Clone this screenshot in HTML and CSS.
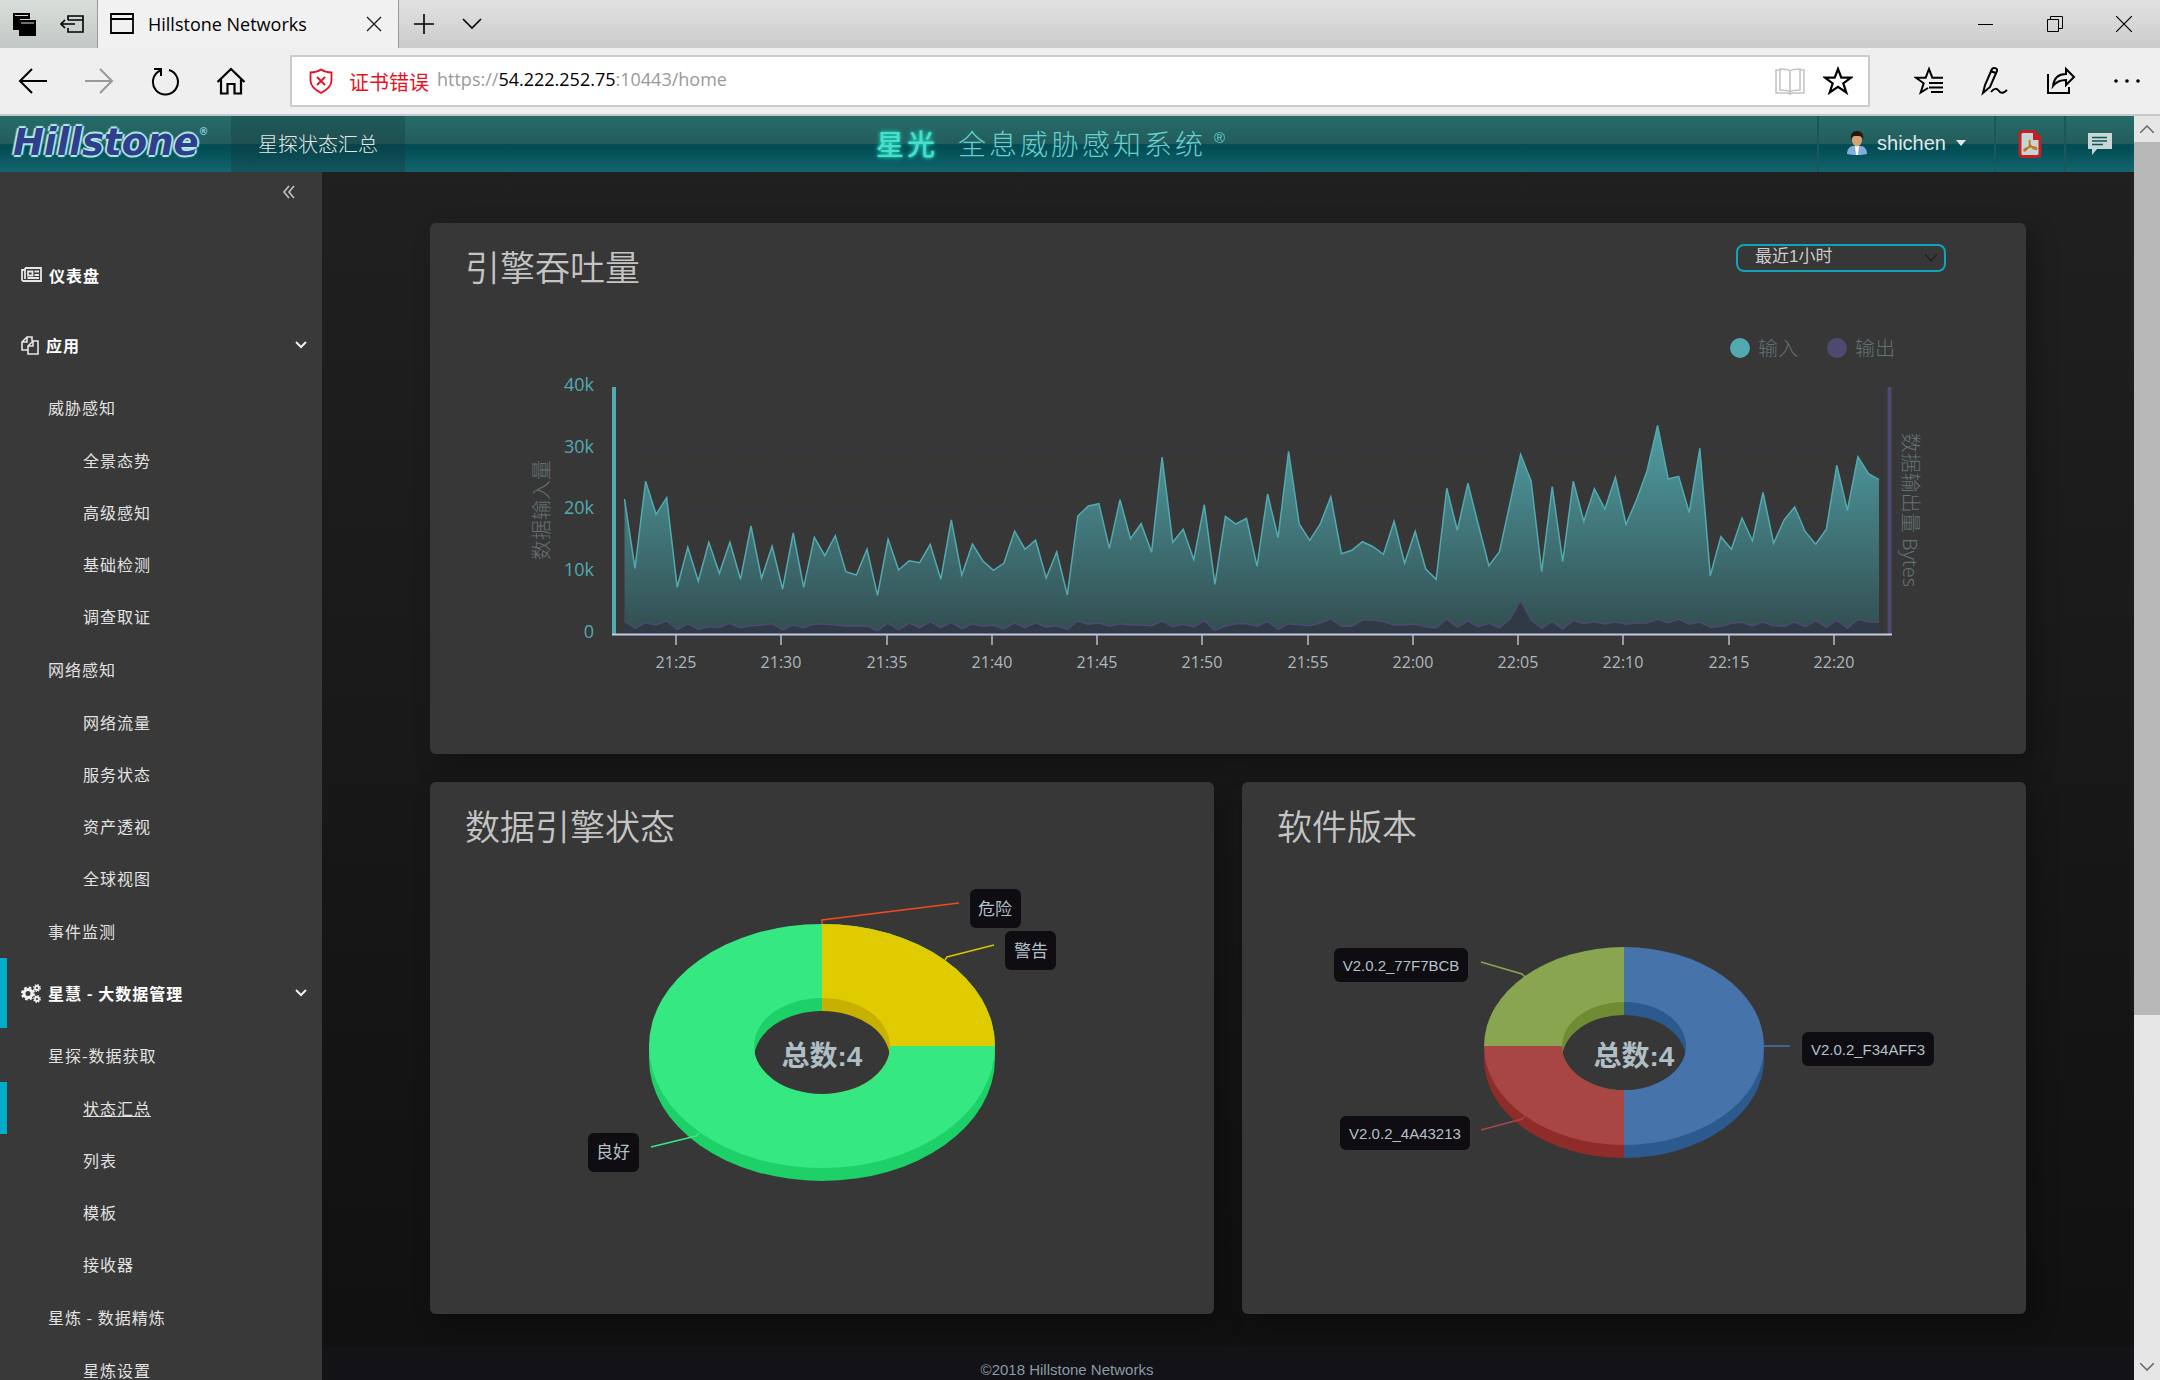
FILE: index.html
```html
<!DOCTYPE html>
<html lang="zh-CN">
<head>
<meta charset="utf-8">
<title>Hillstone Networks</title>
<link rel="stylesheet" href="styles.css">
</head>
<body>
<div class="window">
  <div class="tabbar">
    <div class="tab-tools">
      <button class="icon-btn" aria-label="已保留的标签页"><svg width="24" height="24" viewBox="0 0 24 24"><path d="M1 1h17v6H8v11H1z" fill="#000"/><path d="M7 8h17v16H7z" fill="#000"/><path d="M3 3.500h13M9 11h13" stroke="#ddd" stroke-width="1.200"/></svg></button>
      <button class="icon-btn" aria-label="保留标签页"><svg width="24" height="24" viewBox="0 0 24 24" fill="none" stroke="#000" stroke-width="1.600"><path d="M8 8V4h15v16H8v-4M8 8h15M1 12h14M5 8l-4 4 4 4"/></svg></button>
    </div>
    <div class="tab">
      <svg width="24" height="22" viewBox="0 0 24 22" fill="none" stroke="#000" stroke-width="1.800"><path d="M1 1h22v19H1zM1 6h22"/></svg>
      <span class="tab-title">Hillstone Networks</span>
      <button class="icon-btn" aria-label="关闭标签页"><svg width="16" height="16" viewBox="0 0 16 16" stroke="#222" stroke-width="1.400"><path d="M1 1l14 14M15 1L1 15"/></svg></button>
    </div>
    <div class="tab-new">
      <button class="icon-btn" aria-label="新建标签页"><svg width="20" height="20" viewBox="0 0 20 20" stroke="#000" stroke-width="1.600"><path d="M10 0v20M0 10h20"/></svg></button>
      <button class="icon-btn" aria-label="标签页预览"><svg width="20" height="12" viewBox="0 0 20 12" fill="none" stroke="#000" stroke-width="1.600"><path d="M1 1l9 9 9-9"/></svg></button>
    </div>
    <div class="window-controls">
      <button class="icon-btn" aria-label="最小化"><svg width="16" height="16" viewBox="0 0 16 16" stroke="#000"><path d="M0 8.500h15"/></svg></button>
      <button class="icon-btn" aria-label="还原"><svg width="16" height="16" viewBox="0 0 16 16" fill="none" stroke="#000"><path d="M.5 3.500h11v12H.5zM3.500 3.500v-3h12v12h-4"/></svg></button>
      <button class="icon-btn" aria-label="关闭"><svg width="16" height="16" viewBox="0 0 16 16" stroke="#000" stroke-width="1.200"><path d="M0 0l16 16M16 0L0 16"/></svg></button>
    </div>
  </div>

  <div class="toolbar">
    <div class="nav-buttons">
      <button class="icon-btn" aria-label="后退"><svg width="30" height="28" viewBox="0 0 30 28" fill="none" stroke="#000" stroke-width="2"><path d="M14 2L2 14l12 12M2 14h27"/></svg></button>
      <button class="icon-btn" aria-label="前进"><svg width="30" height="28" viewBox="0 0 30 28" fill="none" stroke="#999" stroke-width="2"><path d="M16 2l12 12-12 12M28 14H1"/></svg></button>
      <button class="icon-btn" aria-label="刷新"><svg width="30" height="30" viewBox="0 0 30 30" fill="none" stroke="#000" stroke-width="2"><path d="M10.500 4.500A12.500 12.500 0 1 0 19 4M4 3h7v7"/></svg></button>
      <button class="icon-btn" aria-label="主页"><svg width="30" height="30" viewBox="0 0 30 30" fill="none" stroke="#000" stroke-width="2.200"><path d="M1.500 16L15 3l13.500 13M5 13v14.500h6.500V18h7v9.500H25V13"/></svg></button>
    </div>
    <div class="address">
      <svg width="24" height="26" viewBox="0 0 24 26" fill="none" stroke="#e81123" stroke-width="1.800"><path d="M12 1.500c3 2 6.500 3 10.500 3v8c0 5-4 9-10.500 12.500C5.500 21.500 1.500 17.500 1.500 12.500v-8c4 0 7.500-1 10.500-3zM8 9l8 8M16 9l-8 8"/></svg>
      <span class="cert">证书错误</span>
      <span class="url" role="textbox" aria-label="地址">https://<b>54.222.252.75</b>:10443/home</span>
      <button class="icon-btn" aria-label="阅读视图"><svg width="30" height="28" viewBox="0 0 30 28" fill="none" stroke="#c4c4c4" stroke-width="1.600"><path d="M5 3H1v23h12l2 1 2-1h12V3h-4M15 4c-2-2-5-2-10-2v21c5 0 8 0 10 2 2-2 5-2 10-2V2c-5 0-8 0-10 2zM15 4v21"/></svg></button>
      <button class="icon-btn" aria-label="收藏"><svg width="30" height="30" viewBox="0 0 30 30" fill="none" stroke="#000" stroke-width="2.200"><path d="M15 3l3.300 8.700H28l-7.700 5.600 3 9.200L15 20.800 6.700 26.500l3-9.200L2 11.700h9.700z"/></svg></button>
    </div>
    <div class="hub-buttons">
      <button class="icon-btn" aria-label="中心"><svg width="30" height="30" viewBox="0 0 30 30" fill="none" stroke="#000"><path d="M29 11.700H18.300L15 3l-3.300 8.700H2l7.700 5.600-3 9.200L14 22M15 17h14M15 21.500h14M17 26h12" stroke-width="2"/></svg></button>
      <button class="icon-btn" aria-label="添加笔记"><svg width="28" height="30" viewBox="0 0 28 30" fill="none" stroke="#000" stroke-width="2"><path d="M2 27l2-8L11 3c1-2 6-1 5 2L9 21zM9 5l6 2M10 26c3-4 6-4 8-1 2 3 5 2 8-1"/></svg></button>
      <button class="icon-btn" aria-label="共享"><svg width="30" height="30" viewBox="0 0 30 30" fill="none" stroke="#000" stroke-width="2"><path d="M2 8v19h21v-6M7 20c1-8 5-12 13-12V3l8 8-8 8v-5c-6 0-10 2-13 6z"/></svg></button>
      <button class="icon-btn" aria-label="设置及其他"><svg width="28" height="6" viewBox="0 0 28 6"><circle cx="3" cy="3" r="1.800"/><circle cx="14" cy="3" r="1.800"/><circle cx="25" cy="3" r="1.800"/></svg></button>
    </div>
  </div>

  <div class="viewport">
    <div class="app">
      <header class="app-header">
        <div class="header-left">
          <a class="logo" href="#">Hillstone<sup>®</sup></a>
          <a class="crumb" href="#">星探状态汇总</a>
        </div>
        <h1 class="brand"><strong>星光</strong><span>全息威胁感知系统</span><sup>®</sup></h1>
        <div class="header-right">
          <button class="user">
            <svg width="20" height="24" viewBox="0 0 20 24"><path d="M0 23c0-5 3-8 6-8h8c3 0 6 3 6 8-5 1.500-15 1.500-20 0z" fill="#7fb0dd"/><path d="M8 15h4l-1 9H9z" fill="#fff"/><ellipse cx="10" cy="9" rx="5" ry="6.500" fill="#d9a273"/><path d="M4 9C3 3 6 0 10 0s7.500 3 6 9c-1-4-3-4-6-4S5 5 4 9z" fill="#2a1512"/></svg>
            <span>shichen</span>
            <svg width="10" height="6" viewBox="0 0 10 6"><path d="M0 0h10L5 6z" fill="#dfe6e6"/></svg>
          </button>
          <button class="tool" aria-label="导出PDF"><svg width="24" height="28" viewBox="0 0 24 28"><path d="M5 1.500h11L22 8v15a3 3 0 0 1-3 3.500H5A3 3 0 0 1 2 23V5a3 3 0 0 1 3-3.500z" fill="#c5d4d4" stroke="#c41f22" stroke-width="3"/><path d="M15 1h2l6 7v2h-8z" fill="#c41f22"/><path d="M11.500 10c1.500 4-1 9-5 11-2-1.500 3-4 6-4 3-1 7 1 6 2-2 1-6-2-7-6z" fill="none" stroke="#c8741c" stroke-width="1.600"/></svg></button>
          <button class="tool" aria-label="消息"><svg width="24" height="22" viewBox="0 0 24 22"><path d="M0 0h24v16H9l-5 6v-6H0z" fill="#c8d6d6"/><path d="M4 4.500h15M4 8h15M4 11.500h11" stroke="#0b565d" stroke-width="1.600"/></svg></button>
        </div>
      </header>

      <div class="app-body">
        <nav class="sidebar">
          <button class="collapse" aria-label="收起"><svg width="14" height="14" viewBox="0 0 14 14" fill="none" stroke="#c4c4c4" stroke-width="1.600"><path d="M7 1L2 7l5 6M12 1L7 7l5 6"/></svg></button>
          <a class="group" href="#"><svg width="21" height="16" viewBox="0 0 21 16" fill="none" stroke="#e6e6e6" stroke-width="1.800"><path d="M4 1h16v13H2.500C1 14 1 13 1 12V3h3M4 1v11M7 4.500h4.500v4H7zM13.500 4.500H18M13.500 8H18M6.500 11H18"/></svg>仪表盘</a>
          <a class="group" href="#"><svg width="18" height="19" viewBox="0 0 18 19" fill="none" stroke="#e6e6e6" stroke-width="1.600"><path d="M7 14H1V6l5-5h5v4M1 6h5V1M7 10l5-5h5v13H7zM7 10h5V5"/></svg>应用<svg class="fold" width="12" height="8" viewBox="0 0 12 8" fill="none" stroke="#eee" stroke-width="2"><path d="M1 1l5 5 5-5"/></svg></a>
          <a class="item" href="#">威胁感知</a>
          <a class="leaf" href="#">全景态势</a>
          <a class="leaf" href="#">高级感知</a>
          <a class="leaf" href="#">基础检测</a>
          <a class="leaf" href="#">调查取证</a>
          <a class="item" href="#">网络感知</a>
          <a class="leaf" href="#">网络流量</a>
          <a class="leaf" href="#">服务状态</a>
          <a class="leaf" href="#">资产透视</a>
          <a class="leaf" href="#">全球视图</a>
          <a class="item" href="#">事件监测</a>
          <a class="group active" href="#"><svg width="20" height="19" viewBox="0 0 20 19" fill="none" stroke="#f2f2f2"><circle cx="7" cy="9.500" r="4" stroke-width="3"/><circle cx="7" cy="9.500" r="6" stroke-width="2" stroke-dasharray="2.700 2.010"/><circle cx="16" cy="4" r="2" stroke-width="1.800"/><circle cx="16" cy="4" r="3.300" stroke-width="1.200" stroke-dasharray="1.500 1.090"/><circle cx="16" cy="15" r="2" stroke-width="1.800"/><circle cx="16" cy="15" r="3.300" stroke-width="1.200" stroke-dasharray="1.500 1.090"/></svg>星慧 - 大数据管理<svg class="fold" width="12" height="8" viewBox="0 0 12 8" fill="none" stroke="#eee" stroke-width="2"><path d="M1 1l5 5 5-5"/></svg></a>
          <a class="item" href="#">星探-数据获取</a>
          <a class="leaf active current" href="#">状态汇总</a>
          <a class="leaf" href="#">列表</a>
          <a class="leaf" href="#">模板</a>
          <a class="leaf" href="#">接收器</a>
          <a class="item" href="#">星炼 - 数据精炼</a>
          <a class="leaf" href="#">星炼设置</a>
        </nav>

        <div class="content">
          <main class="cards">
            <section class="card wide">
              <div class="card-head">
                <h2>引擎吞吐量</h2>
                <label class="range"><select aria-label="时间范围"><option>最近1小时</option><option>最近24小时</option></select><svg width="14" height="8" viewBox="0 0 14 8" fill="none" stroke="#202020" stroke-width="1.200"><path d="M1 0l6 7 6-7"/></svg></label>
              </div>
              <svg class="plot" viewBox="430 320 1596 400">
                <defs><linearGradient id="inflow" x1="0" y1="0" x2="0" y2="1"><stop offset="0" stop-color="#52aab0" stop-opacity=".9"/><stop offset="1" stop-color="#325052" stop-opacity=".9"/></linearGradient></defs>
                <circle cx="1740" cy="348" r="10" fill="#52aab0"/><text class="legend" x="1758" y="356">输入</text>
                <circle cx="1837" cy="348" r="10" fill="#4c4a70"/><text class="legend" x="1855" y="356">输出</text>
                <path class="grid" d="M616 386.500H1887M616 449H1887M616 511H1887M616 572.500H1887"/>
                <polygon id="in-area" fill="url(#inflow)"/><polyline id="in-line" fill="none" stroke="#52aab0" stroke-width="1.500"/>
                <polygon id="out-area" fill="#303946"/><polyline id="out-line" fill="none" stroke="#4c4a70" stroke-width="1.500"/>
                <path d="M614 387v247" stroke="#52aab0" stroke-width="4"/>
                <path d="M1889.500 387v247" stroke="#4c4a70" stroke-width="4"/>
                <path d="M612 634.500H1892" stroke="#c3c7e0" stroke-width="2"/>
                <g id="ticks"></g>
                <g class="y-label"><text x="594" y="391">40k</text><text x="594" y="453">30k</text><text x="594" y="514">20k</text><text x="594" y="576">10k</text><text x="594" y="638">0</text></g>
                <text class="axis-name" transform="translate(549 510) rotate(-90)">数据输入量</text>
                <text class="axis-name" transform="translate(1903 510) rotate(90)">数据输出量 Bytes</text>
              </svg>
            </section>

            <section class="card">
              <div class="card-head"><h2>数据引擎状态</h2></div>
              <svg class="plot" viewBox="430 879 784 340">
                <defs><clipPath id="hole-a"><ellipse cx="822" cy="1046" rx="68" ry="48"/></clipPath></defs>
                <path d="M649 1046v13a173 122 0 0 0 346 0v-13z" fill="#1dd067"/>
                <ellipse cx="822" cy="1046" rx="173" ry="122" fill="#35e882"/>
                <path d="M822 1046V924a173 122 0 0 1 173 122z" fill="#dfcb00"/>
                <g clip-path="url(#hole-a)"><path d="M754 998h68v96h-68z" fill="#1dd067"/><path d="M822 998h68v96h-68z" fill="#c7b000"/><ellipse cx="822" cy="1059" rx="68" ry="48" fill="#373737"/></g>
                <g fill="none" stroke-width="1.500"><path d="M822 924v-4l137-17" stroke="#f04a1c"/><path d="M945 960l2-3 47-12" stroke="#d8c400"/><path d="M699 1133l-3 3-45 11" stroke="#35e882"/></g>
                <g class="tag"><rect x="970" y="889" width="51" height="39" rx="6"/><rect x="1005" y="931" width="51" height="39" rx="6"/><rect x="588" y="1133" width="51" height="39" rx="6"/></g>
                <g class="tag-cn"><text x="995" y="915">危险</text><text x="1031" y="957">警告</text><text x="613" y="1158">良好</text></g>
                <text class="total" x="822" y="1066">总数:4</text>
              </svg>
            </section>

            <section class="card">
              <div class="card-head"><h2>软件版本</h2></div>
              <svg class="plot" viewBox="1242 879 784 340">
                <defs><clipPath id="hole-b"><ellipse cx="1624" cy="1046" rx="62" ry="44"/></clipPath></defs>
                <path d="M1484 1046v13a140 99 0 0 0 140 99v-112z" fill="#8f2c29"/>
                <path d="M1764 1046v13a140 99 0 0 1-140 99v-112z" fill="#2c5a8f"/>
                <path d="M1624 1046V947a140 99 0 0 1 0 198z" fill="#4673a9"/>
                <path d="M1624 1046v99a140 99 0 0 1-140-99z" fill="#a84643"/>
                <path d="M1624 1046h-140a140 99 0 0 1 140-99z" fill="#8aa54f"/>
                <g clip-path="url(#hole-b)"><path d="M1562 1002h62v88h-62z" fill="#6f8c35"/><path d="M1624 1002h62v88h-62z" fill="#2c5a8f"/><ellipse cx="1624" cy="1059" rx="62" ry="44" fill="#373737"/></g>
                <g fill="none" stroke-width="1.500"><path d="M1481 962l41 12 3 3" stroke="#8aa54f"/><path d="M1481 1130l41-11 3-3" stroke="#a84643"/><path d="M1764 1046h26" stroke="#4673a9"/></g>
                <g class="tag"><rect x="1334" y="948" width="134" height="34" rx="6"/><rect x="1340" y="1116" width="130" height="34" rx="6"/><rect x="1802" y="1032" width="132" height="34" rx="6"/></g>
                <g class="tag-ver"><text x="1401" y="971">V2.0.2_77F7BCB</text><text x="1405" y="1139">V2.0.2_4A43213</text><text x="1868" y="1055">V2.0.2_F34AFF3</text></g>
                <text class="total" x="1634" y="1066">总数:4</text>
              </svg>
            </section>
          </main>
          <footer class="footer">©2018 Hillstone Networks</footer>
        </div>
      </div>
    </div>
    <div class="scrollbar">
      <button class="scroll-btn" aria-label="向上滚动"><svg width="14" height="8" viewBox="0 0 14 8" fill="none" stroke="#606060" stroke-width="1.400"><path d="M0 8l7-7 7 7"/></svg></button>
      <div class="track"><div class="thumb"></div></div>
      <button class="scroll-btn" aria-label="向下滚动"><svg width="14" height="8" viewBox="0 0 14 8" fill="none" stroke="#606060" stroke-width="1.400"><path d="M0 0l7 7 7-7"/></svg></button>
    </div>
  </div>
</div>
<script src="chart.js"></script>
</body>
</html>
```
FILE: chart.js
```js
// Samples every 30 seconds, as levels below the top of the plot (942 is the zero line).
const inflow = [537,745,484,583,533,802,682,784,667,760,667,778,618,775,679,807,639,802,652,707,647,755,765,688,826,658,750,722,728,673,778,600,766,672,723,751,729,633,688,660,774,696,825,588,558,551,685,539,656,611,697,411,667,628,719,554,793,
589,612,595,739,522,653,394,612,661,612,530,701,691,665,680,703,604,730,634,747,778,505,631,490,615,737,695,550,403,483,755,500,725,484,604,506,567,472,613,540,452,316,477,469,578,385,767,650,688,594,663,517,670,600,561,635,673,628,436,571,410,461,479];
const outflow = [903,925,908,915,903,929,911,928,920,922,910,923,917,915,911,930,915,923,911,913,915,919,917,918,932,909,929,909,924,904,923,907,926,911,919,916,927,908,923,908,922,917,928,903,913,909,919,911,915,915,917,903,920,913,921,902,931,
918,911,911,919,904,928,911,914,917,909,897,919,919,900,900,905,915,915,912,920,924,897,921,903,920,910,923,897,842,901,925,904,927,901,911,905,912,905,913,909,909,897,909,897,913,906,922,919,910,907,918,906,917,919,906,920,902,922,901,924,898,906,906];

const left = 624.5, right = 1879, zero = 634;

function draw(name, levels) {
  const step = (right - left) / (levels.length - 1);
  const points = levels.map((v, i) => `${(left + i * step).toFixed(1)},${(320 + v / 3).toFixed(1)}`).join(' ');
  document.getElementById(name + '-line').setAttribute('points', points);
  document.getElementById(name + '-area').setAttribute('points', `${left},${zero} ${points} ${right},${zero}`);
}
draw('in', inflow);
draw('out', outflow);

const labels = ['21:25','21:30','21:35','21:40','21:45','21:50','21:55','22:00','22:05','22:10','22:15','22:20'];
document.getElementById('ticks').innerHTML = labels.map((label, i) => {
  const x = Math.round(676 + i * 105.25);
  return `<path d="M${x} 635v10" stroke="#b9bdd8" stroke-width="1.5"/><text class="x-label" x="${x}" y="668">${label}</text>`;
}).join('');
```
FILE: styles.css
```css
* { box-sizing: border-box; }
body {
  margin: 0;
  font-family: "Liberation Sans", "Noto Sans CJK SC", sans-serif;
  font-size: 16px;
  color: #ddd;
}
button { border: 0; padding: 0; background: none; font: inherit; color: inherit; }
a { color: inherit; text-decoration: none; }
svg { display: block; flex: none; }

.window { display: flex; flex-direction: column; height: 100vh; overflow: hidden; }
.icon-btn { display: flex; align-items: center; justify-content: center; }

/* Browser chrome */
.tabbar { display: flex; height: 48px; flex: none; background: linear-gradient(#e2e2e2, #cbcbcb); color: #000; }
.tab-tools { display: flex; align-items: center; gap: 24px; width: 98px; padding-left: 12px; border-right: 1px solid #999; background: linear-gradient(#d8dfdb, #c2c8c5); }
.tab { display: flex; align-items: center; width: 301px; padding: 0 16px 0 12px; background: #f0f1f0; border-right: 1px solid #999; }
.tab-title { flex: 1; margin-left: 14px; font: 18px "Open Sans", "Noto Sans", sans-serif; }
.tab-new { display: flex; align-items: center; gap: 28px; padding-left: 15px; }
.window-controls { display: flex; align-items: center; gap: 53px; margin-left: auto; padding-right: 28px; }

.toolbar { display: flex; align-items: center; height: 68px; flex: none; background: #efefef; border-bottom: 2px solid #c8c8c8; color: #000; }
.nav-buttons { display: flex; align-items: center; gap: 36px; width: 290px; padding-left: 18px; }
.address { display: flex; align-items: center; flex: 1; height: 52px; padding: 0 15px 0 17px; background: #fff; border: 2px solid #ccc; }
.cert { margin-left: 16px; font: 20px "Noto Sans CJK SC", sans-serif; color: #e81123; }
.url { flex: 1; margin-left: 8px; padding-bottom: 5px; font: 18px "Open Sans", "Noto Sans", sans-serif; color: #999; }
.url b { font-weight: 400; color: #000; }
.address .icon-btn { margin-left: 18px; }
.hub-buttons { display: flex; align-items: center; gap: 37px; width: 290px; padding-left: 44px; }

.viewport { display: flex; flex: 1; min-height: 0; }
.app { display: flex; flex-direction: column; flex: 1; min-width: 0; }

/* Application header */
.app-header {
  display: grid;
  grid-template-columns: 1fr auto 1fr;
  height: 56px;
  flex: none;
  background: linear-gradient(#256c68, #235c5c 50%, #024c54 50%, #024c54 56%, #13656e);
}
.header-left { display: flex; }
.logo {
  display: flex;
  align-items: center;
  width: 231px;
  padding-left: 13px;
  padding-bottom: 4px;
  font: italic bold 37px "DejaVu Sans", sans-serif;
  color: #2f3f8c;
  text-shadow: -2px 0 1px #b4eeee, 2px 0 1px #b4eeee, 0 -2px 1px #b4eeee, 0 2px 1px #b4eeee;
}
.logo sup { align-self: flex-start; margin-top: 10px; font-size: 10px; font-style: normal; color: #8fc9e0; text-shadow: none; }
.crumb { display: flex; align-items: center; justify-content: center; width: 174px; padding-bottom: 2px; background: rgba(20, 50, 55, .3); font-size: 20px; font-weight: 300; color: #e2e8e8; }
.brand { display: flex; align-items: center; margin: 0; padding: 0 30px 2px 0; font-size: 28px; font-weight: 300; letter-spacing: 3px; color: #66cfd0; }
.brand strong { margin-right: 20px; font-weight: 500; color: #4fdccb; text-shadow: 0 0 5px #17d8bd, 0 0 3px #17b8a4; }
.brand sup { align-self: flex-start; margin: 12px 0 0 8px; font-size: 15px; line-height: 20px; }
.header-right { display: flex; justify-content: flex-end; }
.header-right button { display: flex; align-items: center; justify-content: center; border-left: 2px solid #1a565a; }
.header-right .user { gap: 10px; width: 177px; padding-bottom: 2px; font-size: 20px; color: #dfe6e6; }
.tool { width: 70px; }

.app-body { display: flex; flex: 1; min-height: 0; }

/* Sidebar */
.sidebar { width: 322px; flex: none; overflow: hidden; background: #393939; font-family: "Noto Sans CJK SC", sans-serif; font-size: 16px; letter-spacing: 1px; color: #e2e2e2; }
.collapse { display: flex; justify-content: flex-end; width: 100%; height: 68px; padding: 13px 26px; }
.group { display: flex; align-items: center; gap: 7px; height: 70px; padding: 0 15px 0 21px; font-weight: 700; color: #fff; }
.fold { margin-left: auto; }
.item { display: flex; align-items: center; height: 54px; padding-left: 48px; }
.leaf { display: flex; align-items: center; height: 52px; padding-left: 83px; }
.active { box-shadow: inset 7px 0 #00acc6; }
.current { text-decoration: underline; }

/* Dashboard */
.content { display: flex; flex-direction: column; flex: 1; min-width: 0; overflow: hidden; background: linear-gradient(#202020, #101010); }
.cards { display: grid; grid-template-columns: 1fr 1fr; gap: 28px; flex: 1; align-content: start; padding: 51px 108px 32px; }
.card { border-radius: 6px; background: #373737; box-shadow: 8px 8px 24px rgba(0, 0, 0, .3); padding-bottom: 95px; }
.wide { grid-column: span 2; padding-bottom: 34px; }
.card-head { display: flex; align-items: flex-start; justify-content: space-between; height: 97px; padding: 17px 80px 0 35px; }
.card-head h2 { margin: 0; font: 350 35px/52px "Noto Sans CJK SC", sans-serif; color: #c4c4c4; }
.plot { width: 100%; height: auto; }

.range { display: flex; align-items: center; width: 210px; height: 28px; margin-top: 4px; padding-right: 6px; border: 2px solid #0fa5b8; border-radius: 8px; }
.range select { flex: 1; appearance: none; border: 0; padding: 0 0 2px 17px; background: none; font: 17px/22px "Liberation Sans", "Noto Sans CJK SC", sans-serif; color: #ccc; }

.legend, .axis-name { font-family: "Noto Sans", "Noto Sans CJK SC", sans-serif; font-size: 20px; font-weight: 300; fill: #647176; }
.axis-name { text-anchor: middle; }
.grid { fill: none; stroke: #37344a; stroke-width: 1; stroke-dasharray: 8 4; }
.x-label { font: 16px "Open Sans", sans-serif; fill: #aeb8bd; text-anchor: middle; }
.y-label { font: 18px "Open Sans", sans-serif; fill: #52aab0; text-anchor: end; }
.tag { fill: #0f0c12; }
.tag-cn { font: 17px "Noto Sans CJK SC", sans-serif; fill: #b3c1c8; text-anchor: middle; }
.tag-ver { font: 15px "Liberation Sans", sans-serif; fill: #b3c1c8; text-anchor: middle; }
.total { font: bold 28px "Liberation Sans", "Noto Sans CJK SC", sans-serif; fill: #b0bec5; text-anchor: middle; }

.footer { height: 34px; flex: none; padding: 14px 322px 0 0; background: #131217; font-size: 15px; line-height: 20px; text-align: center; color: #8a9ba3; }

/* Page scrollbar */
.scrollbar { display: flex; flex-direction: column; width: 26px; flex: none; background: #e6e6e6; }
.scroll-btn { display: flex; align-items: center; justify-content: center; height: 26px; }
.track { flex: 1; }
.thumb { height: 72%; background: #b8b8b8; }
```
